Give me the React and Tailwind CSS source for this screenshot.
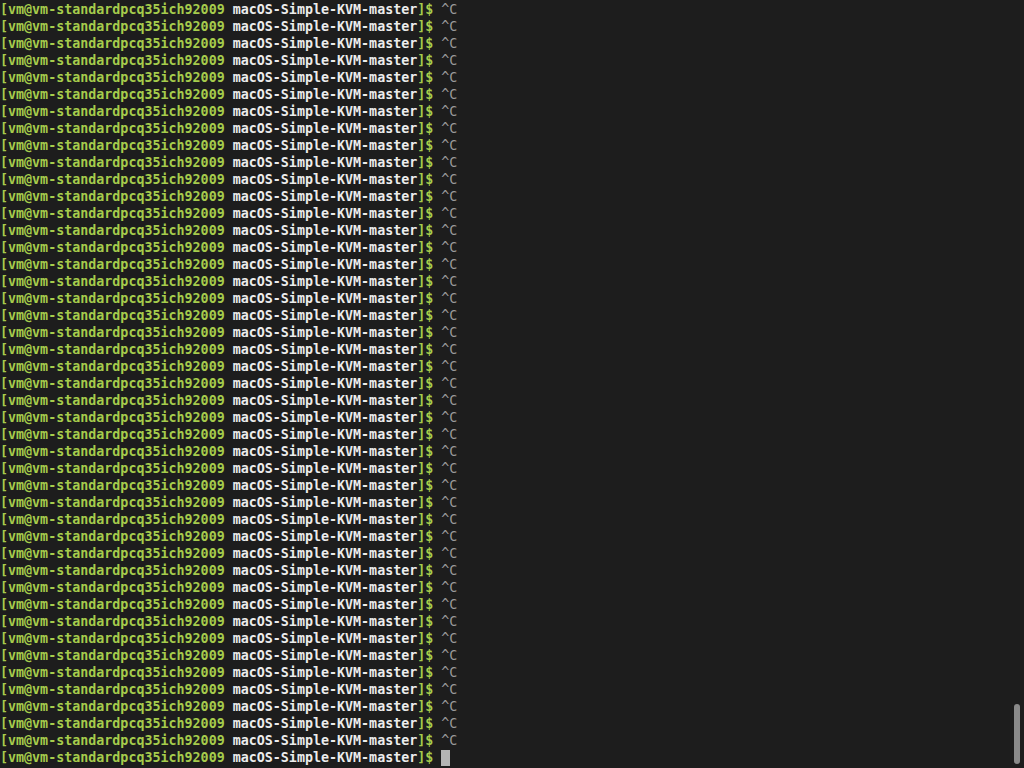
import React from 'react';

const LINES = 45;

export default function App() {
  const rows = Array.from({ length: LINES }, (_, i) => i);

  return (
    <div className="relative w-[1024px] h-[768px] overflow-hidden bg-[#1d1d1d] font-['DejaVu_Sans_Mono',monospace] text-[13.33px] leading-[17px] font-bold">
      <div className="pt-px">
        {rows.map((i) => (
          <div key={i} className="whitespace-pre flex items-center">
            <span className="text-[#a6cc4c]">[vm@vm-standardpcq35ich92009 </span>
            <span className="text-[#ececec]">macOS-Simple-KVM-master</span>
            <span className="text-[#a6cc4c]">]$ </span>
            {i < LINES - 1 ? (
              <span className="text-[#9a9a9a] font-normal">^C</span>
            ) : (
              <span className="inline-block w-[9px] h-[16px] bg-[#b4b4b4]"></span>
            )}
          </div>
        ))}
      </div>

      {/* scrollbar */}
      <div className="absolute right-[4px] top-[704px] w-[6px] h-[60px] rounded-full bg-[#8a8a8a]"></div>
    </div>
  );
}
